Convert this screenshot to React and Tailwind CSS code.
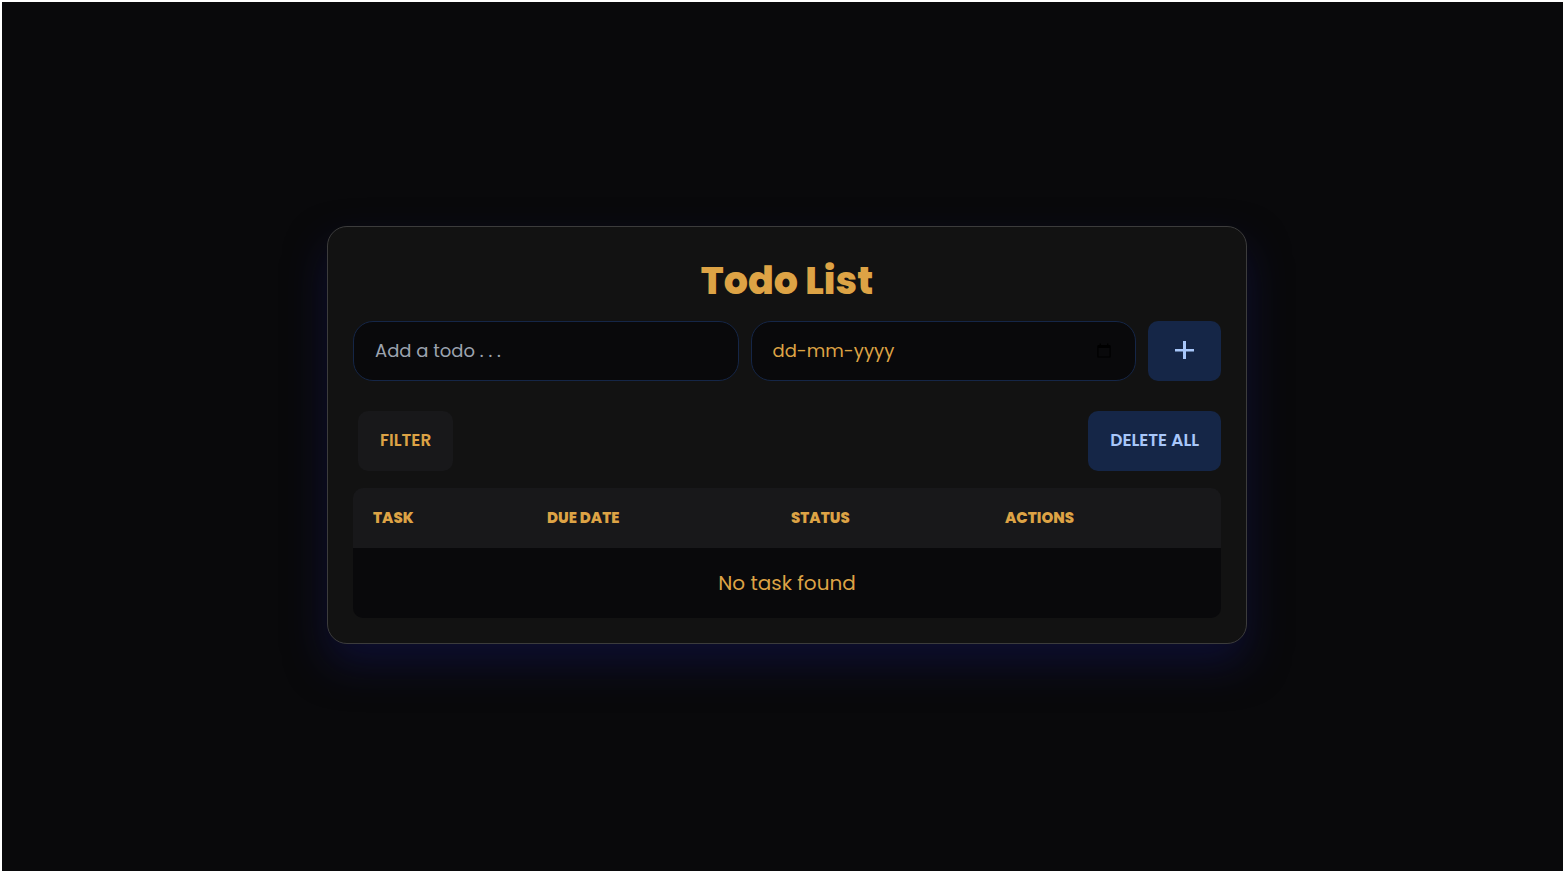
import { useState } from "react";

const columns = [
  { name: "Task", width: "w-[174px]" },
  { name: "Due Date", width: "w-[244px]" },
  { name: "Status", width: "w-[214px]" },
  { name: "Actions", width: "w-auto" },
];

function CalendarIcon() {
  return (
    <svg width="16" height="16" viewBox="0 0 16 16" fill="black" aria-hidden="true">
      <path
        fillRule="evenodd"
        d="M3.6 0.6h1.4v1.4h6V0.6h1.4v1.4h1.1a1.2 1.2 0 0 1 1.2 1.2v10.2a1.2 1.2 0 0 1-1.2 1.2H2.5a1.2 1.2 0 0 1-1.2-1.2V3.2A1.2 1.2 0 0 1 2.5 2h1.1zM2.5 5v8.5h11V5z"
      />
    </svg>
  );
}

export default function App() {
  const [task, setTask] = useState("");
  const [date, setDate] = useState("");
  const field =
    "flex h-[60px] min-w-0 flex-1 items-center rounded-[20px] border border-[#152647] bg-[#09090b] px-[21px]";
  const button = "h-[60px] cursor-pointer rounded-[10px] text-[17px] font-semibold";

  return (
    <main className="flex min-h-screen items-center justify-center border-2 border-white bg-[#09090b] pb-1 pl-[9px] font-['Poppins','Inter',sans-serif] text-[#dda345]">
      <section className="w-full max-w-[920px] rounded-[20px] border border-[#3c3c3c] bg-[#121212] p-[25px] shadow-[0_20px_40px_rgba(18,20,86,0.5)]">
        <h1 className="mb-3 text-center text-[38px] leading-[57px] font-extrabold">Todo List</h1>

        <form className="flex gap-3" onSubmit={(e) => e.preventDefault()}>
          <div className={field}>
            <input
              type="text"
              aria-label="Todo"
              placeholder="Add a todo . . ."
              value={task}
              onChange={(e) => setTask(e.target.value)}
              className="w-full min-w-0 bg-transparent text-[18px] leading-7 outline-none placeholder:text-[#9ca3af]"
            />
          </div>
          <div className={field}>
            <input
              type="text"
              aria-label="Due date"
              placeholder="dd-mm-yyyy"
              value={date}
              onChange={(e) => setDate(e.target.value)}
              className="w-full min-w-0 bg-transparent text-[18px] leading-7 outline-none placeholder:text-[#dda345]"
            />
            <button type="button" aria-label="Pick a date" className="mr-0.5 shrink-0 cursor-pointer">
              <CalendarIcon />
            </button>
          </div>
          <button
            type="submit"
            aria-label="Add"
            className={`${button} flex w-[73px] shrink-0 items-center justify-center bg-[#152647] text-[#a8c7fa]`}
          >
            <svg width="19" height="20" viewBox="0 0 19 20" fill="currentColor" aria-hidden="true">
              <path d="M8 0h3v8h8v2.5h-8V18H8v-7.5H0V8h8z" />
            </svg>
          </button>
        </form>

        <div className="mt-[30px] flex justify-between pl-[5px]">
          <button type="button" className={`${button} bg-[#18181a] px-[22px]`}>
            FILTER
          </button>
          <button type="button" className={`${button} bg-[#152647] px-[22px] text-[#a8c7fa]`}>
            DELETE ALL
          </button>
        </div>

        <div className="mt-[17px] overflow-hidden rounded-[10px]">
          <table className="w-full table-fixed border-collapse">
            <thead className="bg-[#18181a]">
              <tr className="h-[60px]">
                {columns.map((c) => (
                  <th key={c.name} scope="col" className={`${c.width} px-5 pt-0.5 text-left text-[15px] font-extrabold uppercase`}>
                    {c.name}
                  </th>
                ))}
              </tr>
            </thead>
            <tbody className="bg-[#09090b]">
              <tr className="h-[70px]">
                <td colSpan={4} className="px-5 text-center text-[20px]">
                  No task found
                </td>
              </tr>
            </tbody>
          </table>
        </div>
      </section>
    </main>
  );
}
